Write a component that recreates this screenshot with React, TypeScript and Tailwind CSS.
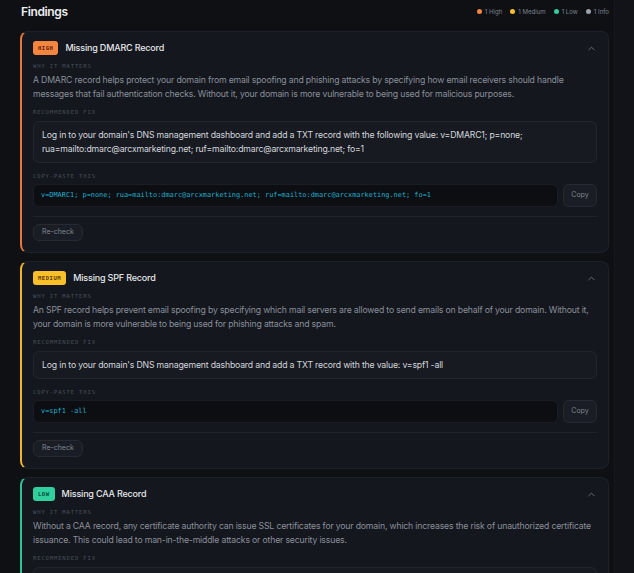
import { ChevronUp } from "lucide-react";

type Severity = "high" | "medium" | "low" | "info";

type Finding = {
  severity: Severity;
  title: string;
  why: string;
  fix: string;
  snippet?: string;
};

const findings: Finding[] = [
  {
    severity: "high",
    title: "Missing DMARC Record",
    why: "A DMARC record helps protect your domain from email spoofing and phishing attacks by specifying how email receivers should handle messages that fail authentication checks. Without it, your domain is more vulnerable to being used for malicious purposes.",
    fix: "Log in to your domain's DNS management dashboard and add a TXT record with the following value: v=DMARC1; p=none; rua=mailto:dmarc@arcxmarketing.net; ruf=mailto:dmarc@arcxmarketing.net; fo=1",
    snippet:
      "v=DMARC1; p=none; rua=mailto:dmarc@arcxmarketing.net; ruf=mailto:dmarc@arcxmarketing.net; fo=1",
  },
  {
    severity: "medium",
    title: "Missing SPF Record",
    why: "An SPF record helps prevent email spoofing by specifying which mail servers are allowed to send emails on behalf of your domain. Without it, your domain is more vulnerable to being used for phishing attacks and spam.",
    fix: "Log in to your domain's DNS management dashboard and add a TXT record with the value: v=spf1 -all",
    snippet: "v=spf1 -all",
  },
  {
    severity: "low",
    title: "Missing CAA Record",
    why: "Without a CAA record, any certificate authority can issue SSL certificates for your domain, which increases the risk of unauthorized certificate issuance. This could lead to man-in-the-middle attacks or other security issues.",
    fix: "Log in to your domain's DNS management dashboard and add a CAA record that names the certificate authorities allowed to issue for your domain.",
    snippet: '0 issue "letsencrypt.org"',
  },
];

const badgeStyles: Record<Severity, string> = {
  high: "bg-[#f5853f] text-[#5a2308]",
  medium: "bg-[#fbbf2a] text-[#5c3d05]",
  low: "bg-[#2fcf9e] text-[#064a37]",
  info: "bg-[#9ca3af] text-[#1f2937]",
};

const borderStyles: Record<Severity, string> = {
  high: "border-l-[#e8793a]",
  medium: "border-l-[#f2b52a]",
  low: "border-l-[#2cc497]",
  info: "border-l-[#9ca3af]",
};

const legend = [
  { label: "1 High", dot: "bg-[#f5853f]" },
  { label: "1 Medium", dot: "bg-[#fbbf2a]" },
  { label: "1 Low", dot: "bg-[#2fcf9e]" },
  { label: "1 Info", dot: "bg-[#9ca3af]" },
];

function SectionLabel({ children }: { children: string }) {
  return (
    <div className="font-['DejaVu_Sans_Mono',monospace] text-[5.5px] leading-[8px] tracking-[0.16em] text-[#4a505c]">
      {children}
    </div>
  );
}

function FindingCard({ finding }: { finding: Finding }) {
  return (
    <section
      className={`rounded-lg border border-[#1d2129] border-l-2 bg-[#14171d] pb-[11px] pl-[11px] pr-[11px] pt-[9px] ${borderStyles[finding.severity]}`}
    >
      <div className="flex h-[14px] items-center">
        <span
          className={`flex h-[14px] items-center rounded-[3px] px-[5px] font-['DejaVu_Sans_Mono',monospace] text-[5.5px] font-bold uppercase tracking-[0.1em] ${badgeStyles[finding.severity]}`}
        >
          {finding.severity}
        </span>
        <span className="ml-[7px] text-[9px] font-medium tracking-[-0.02em] text-[#e5e7eb]">
          {finding.title}
        </span>
        <ChevronUp className="ml-auto h-[11px] w-[11px] text-[#6b7280]" strokeWidth={2} />
      </div>

      <div className="mt-[7px]">
        <SectionLabel>WHY IT MATTERS</SectionLabel>
        <p className="mt-[3px] pr-[3px] text-[8.7px] leading-[14px] tracking-[-0.02em] text-[#8a909b]">
          {finding.why}
        </p>
      </div>

      <div className="mt-[7px]">
        <SectionLabel>RECOMMENDED FIX</SectionLabel>
        <div className="mt-[5px] rounded-md border border-[#22262e] bg-[#171a21] px-[8px] py-[6px] text-[8.7px] leading-[14px] tracking-[-0.02em] text-[#d4d7dd]">
          {finding.fix}
        </div>
      </div>

      {finding.snippet && (
        <div className="mt-[9px]">
          <SectionLabel>COPY-PASTE THIS</SectionLabel>
          <div className="mt-[4px] flex gap-[5px]">
            <code className="flex h-[23px] flex-1 items-center rounded-md border border-[#1a1d24] bg-[#0c0e12] px-[7px] font-['DejaVu_Sans_Mono',monospace] text-[6.9px] text-[#21b0cf]">
              {finding.snippet}
            </code>
            <button
              type="button"
              className="h-[23px] w-[34px] rounded-md border border-[#262a33] bg-[#1a1d25] text-[7px] text-[#80868f]"
            >
              Copy
            </button>
          </div>
        </div>
      )}

      <div className="mt-[9px] flex border-t border-[#1f232b] pt-[7px]">
        <button
          type="button"
          className="h-[17px] rounded-md border border-[#262a33] bg-[#1a1d25] px-[8px] text-[7px] text-[#80868f]"
        >
          Re-check
        </button>
      </div>
    </section>
  );
}

export default function App() {
  return (
    <div className="flex h-[573px] overflow-hidden bg-[#0e1014] font-['Inter',sans-serif]">
      <main className="flex-1 pl-[20px] pr-[5px]">
        <header className="flex h-[23px] items-center justify-between">
          <h2 className="pl-[1px] text-[12px] font-semibold tracking-[-0.03em] text-[#eceef1]">
            Findings
          </h2>
          <div className="flex items-center gap-[8px] text-[6.1px] text-[#7d838d]">
            {legend.map((item) => (
              <span key={item.label} className="flex items-center gap-[3px]">
                <span className={`h-[5px] w-[5px] rounded-full ${item.dot}`} />
                {item.label}
              </span>
            ))}
          </div>
        </header>

        <div className="mt-[8px] flex flex-col gap-[8px]">
          {findings.map((f) => (
            <FindingCard key={f.title} finding={f} />
          ))}
        </div>
      </main>
      <aside className="w-[20px] border-l border-[#16181d] bg-[#111318]" />
    </div>
  );
}
